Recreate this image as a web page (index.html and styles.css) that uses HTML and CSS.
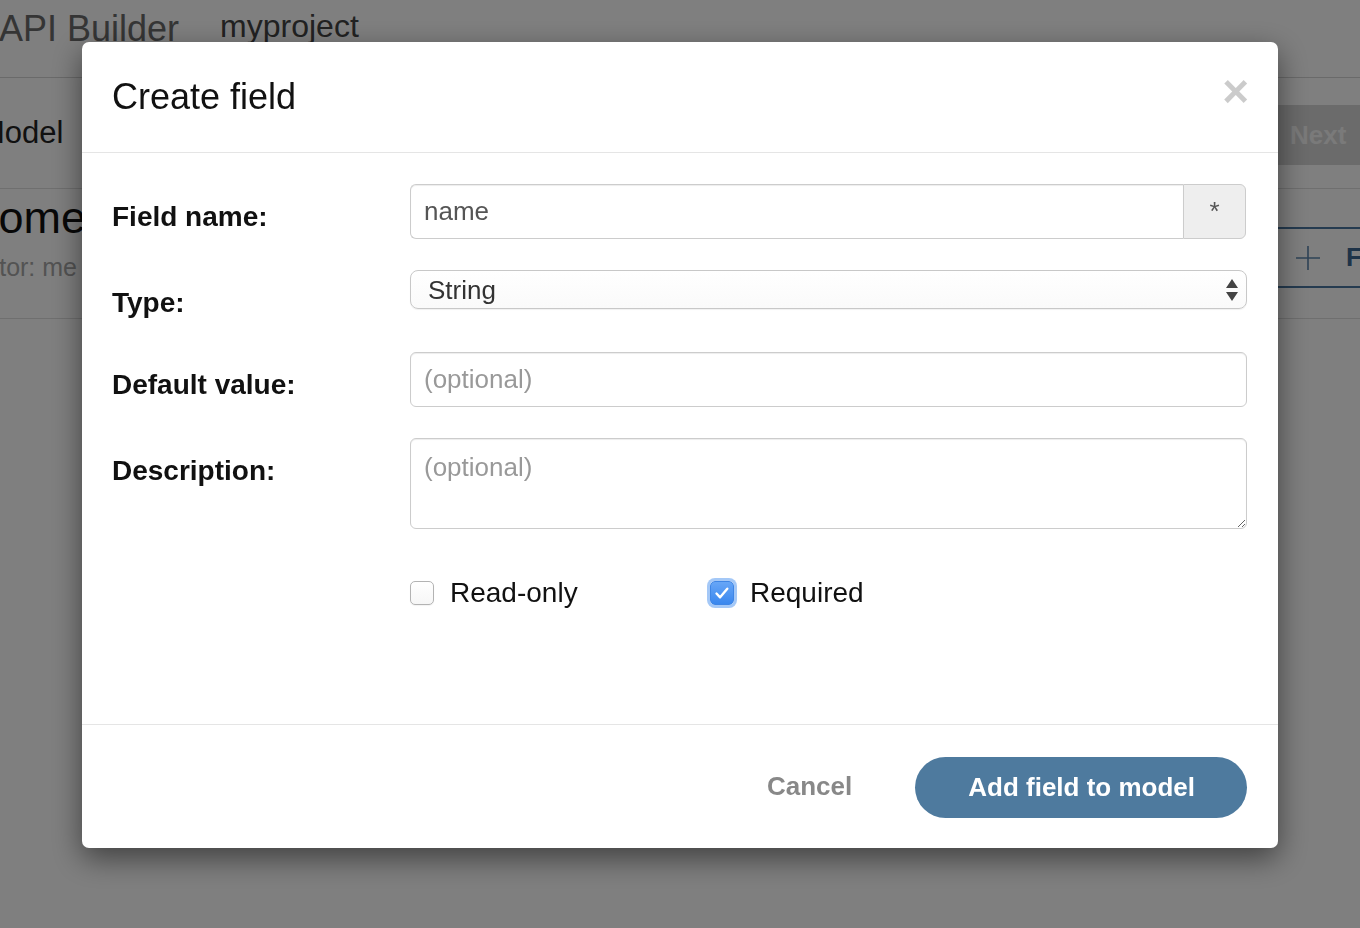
FILE: index.html
```html
<!DOCTYPE html>
<html lang="en">
<head>
<meta charset="utf-8">
<title>Create field</title>
<link rel="stylesheet" href="styles.css">
</head>
<body>
<div class="page">
  <header class="topbar">
    <span class="brand">API Builder</span>
    <span class="project">myproject</span>
  </header>
  <div class="subbar">
    <span class="crumb">Model</span>
    <span class="next-btn">Next</span>
  </div>
  <div class="content">
    <div class="model-info">
      <div class="model-title">Customer</div>
      <div class="model-meta">Creator: me</div>
    </div>
    <div class="add-field-tab">
      <svg class="plus" width="26" height="26" viewBox="0 0 26 26"><path d="M13 1v24M1 13h24" stroke="currentColor" stroke-width="1.6" fill="none"/></svg>
      <span class="tab-text">Field</span>
    </div>
  </div>
</div>

<div class="backdrop"></div>

<div class="modal">
  <div class="modal-header">
    <h4 class="modal-title">Create field</h4>
    <span class="close">×</span>
  </div>
  <div class="modal-body">
    <div class="form-row row-name">
      <label class="control-label">Field name:</label>
      <div class="control">
        <div class="input-group">
          <input class="form-control grouped" type="text" value="name">
          <span class="addon">*</span>
        </div>
      </div>
    </div>
    <div class="form-row row-type">
      <label class="control-label">Type:</label>
      <div class="control">
        <div class="select-wrap">
          <select class="form-select">
            <option>String</option>
          </select>
          <svg class="select-arrows" width="12" height="22" viewBox="0 0 12 22"><path d="M6 0L12 9H0Z M0 13H12L6 22Z" fill="#444"/></svg>
        </div>
      </div>
    </div>
    <div class="form-row row-default">
      <label class="control-label">Default value:</label>
      <div class="control">
        <input class="form-control" type="text" placeholder="(optional)">
      </div>
    </div>
    <div class="form-row row-desc">
      <label class="control-label">Description:</label>
      <div class="control">
        <textarea class="form-control textarea" placeholder="(optional)"></textarea>
      </div>
    </div>
    <div class="form-row row-checks">
      <span class="control-label empty"></span>
      <div class="control checks">
        <div class="check">
          <span class="box"></span>
          <span class="check-label">Read-only</span>
        </div>
        <div class="check">
          <span class="box checked"><svg width="24" height="24" viewBox="0 0 24 24"><path d="M6.5 12.5l3.6 3.8 7.2-8.6" stroke="#fff" stroke-width="2.4" fill="none" stroke-linecap="round" stroke-linejoin="round"/></svg></span>
          <span class="check-label">Required</span>
        </div>
      </div>
    </div>
  </div>
  <div class="modal-footer">
    <button class="btn-cancel" type="button">Cancel</button>
    <button class="btn-primary" type="button">Add field to model</button>
  </div>
</div>
</body>
</html>
```

FILE: styles.css
```css
* { box-sizing: border-box; }
html, body { margin: 0; height: 100%; }
body {
  font-family: "Liberation Sans", Arial, Helvetica, sans-serif;
  background: #fff;
  color: #333;
  overflow: hidden;
}

/* ---------- background page ---------- */
.page { width: 1360px; }
.topbar {
  height: 78px;
  border-bottom: 1px solid #d4d4d4;
  display: flex;
  align-items: flex-start;
  white-space: nowrap;
}
.brand {
  font-size: 36px;
  line-height: 36px;
  color: #6b6b6b;
  margin: 11px 0 0 -1px;
}
.project {
  font-size: 32px;
  line-height: 32px;
  color: #444;
  margin: 10px 0 0 41px;
}
.subbar {
  height: 111px;
  border-bottom: 1px solid #dedede;
  display: flex;
  align-items: center;
  justify-content: space-between;
}
.crumb {
  font-size: 31px;
  color: #222;
  margin-left: -21px;
}
.next-btn {
  width: 82px;
  height: 60px;
  padding-left: 12px;
  background: #d6d6d6;
  color: #f4f4f4;
  font-weight: bold;
  font-size: 26px;
  line-height: 60px;
  margin-top: 4px;
}
.content {
  height: 130px;
  border-bottom: 1px solid #dedede;
  display: flex;
}
.model-info {
  flex: 1;
  padding-top: 4px;
  white-space: nowrap;
}
.model-title {
  font-size: 45px;
  line-height: 50px;
  color: #111;
  margin-left: -94px;
}
.model-meta {
  font-size: 25px;
  line-height: 34px;
  color: #a6a6a6;
  margin: 7px 0 0 -55px;
}
.add-field-tab {
  flex: none;
  width: 82px;
  height: 61px;
  margin-top: 38px;
  border-top: 2px solid #4a76a0;
  border-bottom: 2px solid #4a76a0;
  display: flex;
  align-items: center;
  gap: 25px;
  padding-left: 17px;
  color: #5d86ad;
  overflow: hidden;
  white-space: nowrap;
}
.plus { flex: none; }
.tab-text {
  font-weight: bold;
  font-size: 26px;
  color: #3c6791;
}

/* ---------- backdrop + modal ---------- */
.backdrop {
  position: fixed;
  inset: 0;
  background: rgba(0, 0, 0, 0.5);
}
.modal {
  position: fixed;
  left: 82px;
  top: 42px;
  width: 1196px;
  background: #fff;
  border-radius: 7px;
  box-shadow: 0 10px 30px rgba(0, 0, 0, 0.5);
  display: flex;
  flex-direction: column;
}
.modal-header {
  height: 111px;
  border-bottom: 1px solid #e5e5e5;
  display: flex;
  align-items: center;
  justify-content: space-between;
  padding: 0 29px 0 30px;
}
.modal-title {
  margin: 0;
  font-size: 36px;
  line-height: 40px;
  font-weight: normal;
  color: #111;
}
.close {
  align-self: flex-start;
  margin-top: 26px;
  font-size: 46px;
  line-height: 46px;
  font-weight: bold;
  color: #000;
  opacity: 0.2;
}
.modal-body {
  height: 571px;
  padding: 31px 31px 0 30px;
}
.form-row { display: flex; align-items: flex-start; }
.control-label {
  flex: none;
  width: 298px;
  padding-top: 13px;
  font-size: 28px;
  line-height: 40px;
  font-weight: bold;
  color: #111;
}
.control { flex: 1; min-width: 0; }
.row-name { margin-bottom: 31px; }
.row-type { height: 39px; margin-bottom: 43px; }
.row-default { margin-bottom: 31px; }
.row-desc { margin-bottom: 44px; }
.control-label.empty { padding: 0; height: 40px; }

.form-control {
  display: block;
  width: 100%;
  height: 55px;
  padding: 0 13px;
  font-family: inherit;
  font-size: 26px;
  color: #555;
  background: #fff;
  border: 1px solid #ccc;
  border-radius: 6px;
  box-shadow: inset 0 1px 1px rgba(0, 0, 0, 0.075);
  outline: none;
}
.form-control::placeholder { color: #999; opacity: 1; }
.input-group { display: flex; margin-right: 1px; }
.form-control.grouped {
  flex: 1;
  border-radius: 6px 0 0 6px;
  border-right: 0;
}
.addon {
  flex: none;
  width: 63px;
  height: 55px;
  display: flex;
  align-items: center;
  justify-content: center;
  background: #eee;
  border: 1px solid #ccc;
  border-radius: 0 6px 6px 0;
  color: #555;
  font-size: 26px;
}
.select-wrap { position: relative; }
.form-select {
  display: block;
  width: 100%;
  height: 39px;
  padding: 0 0 0 17px;
  appearance: none;
  -webkit-appearance: none;
  font-family: inherit;
  font-size: 26px;
  color: #333;
  background: linear-gradient(#fff, #fafafa);
  border: 1px solid #c8c8c8;
  border-radius: 8px;
  box-shadow: 0 1px 1px rgba(0, 0, 0, 0.06);
  outline: none;
}
.select-arrows {
  position: absolute;
  right: 9px;
  top: 9px;
}
.textarea {
  height: 91px;
  padding: 10px 13px;
  line-height: 36px;
  resize: vertical;
}

.checks {
  display: grid;
  grid-template-columns: 300px 300px;
}
.check {
  display: flex;
  align-items: center;
  gap: 16px;
  height: 40px;
}
.box {
  flex: none;
  width: 24px;
  height: 24px;
  border: 1px solid #b3b3b3;
  border-radius: 5px;
  background: linear-gradient(#fff, #f6f6f6);
  box-shadow: 0 1px 1px rgba(0, 0, 0, 0.05);
  display: flex;
}
.box.checked {
  border: 1px solid #3f86e6;
  background: linear-gradient(#67a6f7, #3a87ee);
  box-shadow: 0 0 0 3px rgba(90, 154, 240, 0.55);
}
.box.checked svg { margin: -1px; }
.check-label {
  font-size: 28px;
  line-height: 40px;
  color: #111;
}

.modal-footer {
  height: 124px;
  border-top: 1px solid #e5e5e5;
  display: flex;
  align-items: center;
  justify-content: flex-end;
  padding: 0 31px;
}
.btn-cancel {
  font-family: inherit;
  font-size: 26px;
  font-weight: bold;
  color: #888;
  background: none;
  border: 0;
  padding: 0;
  margin-right: 63px;
}
.btn-primary {
  font-family: inherit;
  font-size: 26px;
  font-weight: bold;
  color: #fff;
  background: #4e7a9e;
  border: 0;
  height: 61px;
  padding: 0 52px 0 53px;
  border-radius: 31px;
  margin-top: 1px;
}
```
